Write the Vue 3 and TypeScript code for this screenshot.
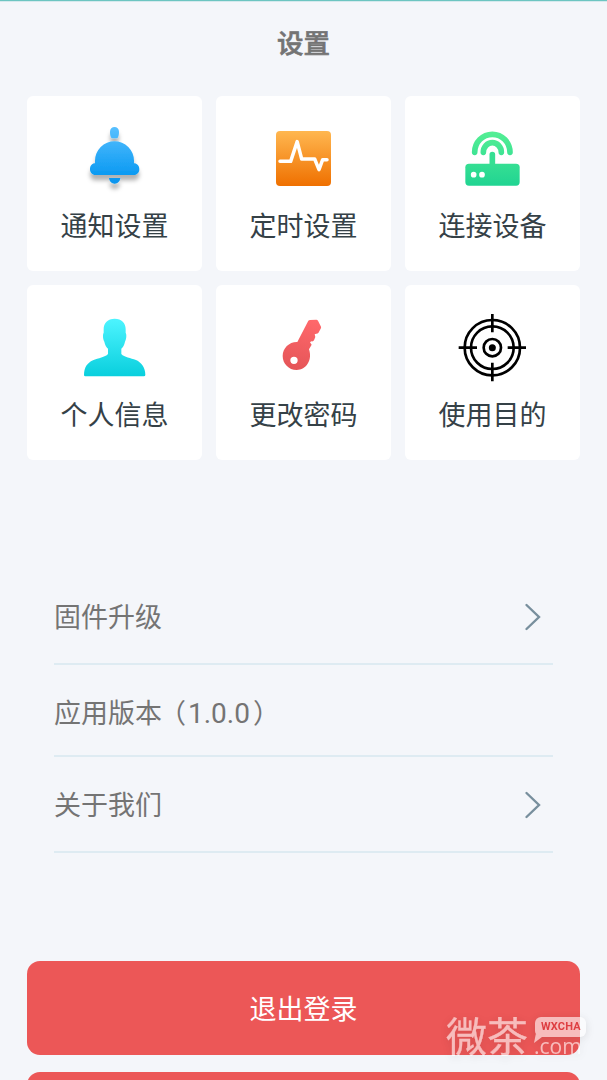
<script setup lang="ts">
type IconName = 'bell' | 'pulse' | 'router' | 'person' | 'key' | 'target'

interface Tile {
  icon: IconName
  label: string
  viewBox: string
}

interface Row {
  label: string
  version?: string
  arrow: boolean
  kind: string
}

const tiles: Tile[] = [
  { icon: 'bell', label: '通知设置', viewBox: '-3 0 270 270' },
  { icon: 'pulse', label: '定时设置', viewBox: '-6 0 270 270' },
  { icon: 'router', label: '连接设备', viewBox: '-9 0 270 270' },
  { icon: 'person', label: '个人信息', viewBox: '-3 -18 270 270' },
  { icon: 'key', label: '更改密码', viewBox: '-6 -18 270 270' },
  { icon: 'target', label: '使用目的', viewBox: '-9 -18 270 270' },
]

const rows: Row[] = [
  { label: '固件升级', arrow: true, kind: 'firmware' },
  { label: '应用版本', version: '1.0.0', arrow: false, kind: 'version' },
  { label: '关于我们', arrow: true, kind: 'about' },
]
</script>

<template>
  <main class="screen">
    <header class="title">设置</header>

    <section class="tiles">
      <div v-for="tile in tiles" :key="tile.icon" class="tile">
        <svg class="tile-icon" :viewBox="tile.viewBox">
          <template v-if="tile.icon === 'bell'">
            <defs>
              <linearGradient id="bellFill" gradientUnits="userSpaceOnUse" x1="0" y1="50" x2="0" y2="220">
                <stop offset="0" stop-color="#58c0ff" />
                <stop offset="0.85" stop-color="#0c9af2" />
                <stop offset="1" stop-color="#0895ee" />
              </linearGradient>
              <filter id="bellShadow" x="-30%" y="-30%" width="160%" height="170%">
                <feDropShadow dx="0" dy="16" stdDeviation="7" flood-color="#000" flood-opacity="0.3" />
              </filter>
            </defs>
            <g fill="url(#bellFill)" filter="url(#bellShadow)">
              <path d="M120 65a13.500 14 0 0 1 27 0c0 8-1 13-3 17q-1 3-4 3h-13q-3 0-4-3c-2-4-3-9-3-17z" />
              <path d="M75 160v-8a58.500 58.500 0 0 1 117 0v8c9 0 16 8 16 17.500s-7 17.500-16 17.500H76c-9 0-16-8-16-17.500S66 160 75 160z" />
              <path d="M117 204h34c-1 10-8 17-17 17s-16-7-17-17z" />
            </g>
          </template>

          <template v-else-if="tile.icon === 'pulse'">
            <defs>
              <linearGradient id="pulseFill" x1="0" y1="0" x2="0" y2="1">
                <stop offset="0" stop-color="#ffb750" />
                <stop offset="1" stop-color="#ef7000" />
              </linearGradient>
            </defs>
            <rect x="48" y="63" width="165" height="165" rx="12" fill="url(#pulseFill)" />
            <path d="M60 154H92L111.500 95L125 147H164L177 179L188 149H201" fill="none" stroke="#fff" stroke-width="10.500" stroke-linecap="round" stroke-linejoin="round" />
          </template>

          <template v-else-if="tile.icon === 'router'">
            <defs>
              <linearGradient id="routerFill" gradientUnits="userSpaceOnUse" x1="0" y1="62" x2="0" y2="228">
                <stop offset="0" stop-color="#55ef94" />
                <stop offset="1" stop-color="#20d492" />
              </linearGradient>
            </defs>
            <g fill="none" stroke="url(#routerFill)" stroke-width="17" stroke-linecap="round">
              <path d="M74 127a53 54 0 0 1 106 0" />
              <path d="M100 127a27 29 0 0 1 54 0" />
              <path d="M127 133.500V170" stroke="#36df93" />
            </g>
            <rect x="46" y="161" width="163" height="66" rx="11" fill="url(#routerFill)" />
            <circle cx="71" cy="194" r="8.500" fill="#fff" />
            <circle cx="96" cy="194" r="8.500" fill="#fff" />
          </template>

          <template v-else-if="tile.icon === 'person'">
            <defs>
              <linearGradient id="personFill" x1="0" y1="0" x2="0" y2="1">
                <stop offset="0" stop-color="#4df4ff" />
                <stop offset="1" stop-color="#09cfdd" />
              </linearGradient>
            </defs>
            <path d="M134 41C113 41 101 54 101 72V83C98 87 98 101 103 110C105 120 109 126 114 131V147C105 157 85 159 69 166C51 174 42 188 42 210Q42 214 46 214H221Q226 214 226 210C226 188 215 173 198 165C182 159 163 157 154 147V131C159 126 163 120 165 110C170 101 170 87 167 83V72C167 54 155 41 134 41Z" fill="url(#personFill)" />
          </template>

          <template v-else-if="tile.icon === 'key'">
            <defs>
              <linearGradient id="keyFill" gradientUnits="userSpaceOnUse" x1="150" y1="44" x2="110" y2="195">
                <stop offset="0" stop-color="#ff686b" />
                <stop offset="1" stop-color="#e55558" />
              </linearGradient>
            </defs>
            <path fill-rule="evenodd" d="M145 47Q147 45 150 45L169 44Q172 44 174 47L183 65Q184 68 182 71L175 84Q173 86 169 86L164 88L166 96L162 106Q160 110 154 109L150 112L155 119L147 133C158 165 139 195 110 195C86 195 68 176 68 153C68 129 88 110 112 111ZM113 166A11 11 0 1 0 91 166A11 11 0 1 0 113 166Z" fill="url(#keyFill)" />
          </template>

          <g v-else fill="none" stroke="#000" stroke-width="8">
            <circle cx="127" cy="128" r="83" />
            <circle cx="127" cy="128" r="64" />
            <circle cx="127" cy="128" r="26" />
            <circle cx="127" cy="128" r="10.500" fill="#000" stroke="none" />
            <path d="M127 27V82M127 173V229M26 128H81M173 128H228" />
          </g>
        </svg>
        <div class="tile-label">{{ tile.label }}</div>
      </div>
    </section>

    <section class="list">
      <div v-for="row in rows" :key="row.kind" class="row" :class="row.kind">
        <span class="row-label">{{ row.label }}<template v-if="row.version"><span class="open">（</span><span class="number">{{ row.version }}</span><span class="close">）</span></template></span>
        <svg v-if="row.arrow" class="arrow" viewBox="0 0 18 28">
          <path d="M2.500 2L15 14L2.500 26" />
        </svg>
      </div>
    </section>

    <section class="actions">
      <button class="action" type="button">退出登录</button>
      <button class="action" type="button"></button>
    </section>

    <div class="watermark">
      <span class="mark-name">微茶</span>
      <span class="mark-site">
        <span class="mark-bubble">WXCHA</span>
        <span class="mark-domain">.com</span>
      </span>
    </div>
  </main>
</template>

<style>
body {
  margin: 0;
  overflow: hidden;
}
</style>

<style scoped>
.screen {
  position: relative;
  box-sizing: border-box;
  width: 100%;
  height: 1080px;
  overflow: hidden;
  background: #f4f6fa;
  border-top: 1px solid #6cc5c1;
  box-shadow: inset 0 1px 0 #d5e9ed;
  font-family: "Noto Sans CJK SC", sans-serif;
}

.title {
  height: 95px;
  padding-top: 21px;
  box-sizing: border-box;
  text-align: center;
  font-size: 26.5px;
  line-height: 40px;
  font-weight: 500;
  color: #747474;
  -webkit-text-stroke: 0.6px #747474;
}

.tiles {
  display: grid;
  grid-template-columns: repeat(3, 175px);
  grid-auto-rows: 175px;
  gap: 14px;
  padding: 0 27px;
}

.tile {
  display: flex;
  flex-direction: column;
  align-items: center;
  background: #fff;
  border-radius: 6px;
}

.tile-icon {
  width: 90px;
  height: 90px;
  margin-top: 14px;
  margin-right: 1px;
}

.tile-label {
  margin-top: 5px;
  font-size: 27px;
  line-height: 40px;
  color: #354147;
  white-space: nowrap;
}

.list {
  margin: 111px 54px 0;
}

.row {
  display: flex;
  align-items: center;
  justify-content: space-between;
  box-sizing: border-box;
  height: 94px;
  padding-right: 11px;
  border-bottom: 2px solid #deebf2;
  font-size: 27px;
  line-height: 40px;
  color: #747474;
}

.row-label {
  margin-bottom: 2px;
  white-space: nowrap;
}

.version {
  height: 92px;
  padding-top: 6px;
}

.about {
  height: 96px;
  padding-top: 2px;
}

.open {
  margin: 0 2px 0 -3px;
}

.number {
  font-family: Roboto, sans-serif;
  font-size: 28px;
  line-height: 1;
}

.close {
  margin-left: 3px;
}

.arrow {
  width: 18px;
  height: 28px;
}

.arrow path {
  fill: none;
  stroke: #788f9d;
  stroke-width: 2.4;
  stroke-linecap: round;
}

.actions {
  display: flex;
  flex-direction: column;
  gap: 17px;
  margin-top: 108px;
  padding: 0 27px;
}

.action {
  flex: none;
  height: 94px;
  padding: 0 0 1px;
  border: 0;
  border-radius: 13px;
  background: #ec5757;
  color: #fff;
  font-family: inherit;
  font-size: 27px;
}

.watermark {
  position: absolute;
  left: 446px;
  top: 1014px;
  display: flex;
  color: #fff;
  opacity: 0.6;
  filter: drop-shadow(0 2px 5px rgba(0, 0, 0, 0.18));
}

.mark-name {
  width: 83px;
  margin-top: -3px;
  font-size: 41px;
  line-height: 44px;
  white-space: nowrap;
  -webkit-text-stroke: 0.3px #fff;
}

.mark-site {
  display: flex;
  flex-direction: column;
  padding: 2px 0 0 6px;
}

.mark-bubble {
  position: relative;
  width: 51px;
  height: 20px;
  border-radius: 6px;
  background: #fff;
  color: #d62f35;
  font: 700 11px/20px Roboto, sans-serif;
  letter-spacing: 0.2px;
  text-indent: 6px;
}

.mark-bubble::before {
  content: "";
  position: absolute;
  left: -1px;
  top: 17px;
  width: 9px;
  height: 9px;
  background: #fff;
  clip-path: polygon(20% 0, 100% 25%, 0 100%);
}

.mark-domain {
  margin-top: -2px;
  margin-left: -1px;
  font: 400 21px/22px "Open Sans", sans-serif;
}
</style>
